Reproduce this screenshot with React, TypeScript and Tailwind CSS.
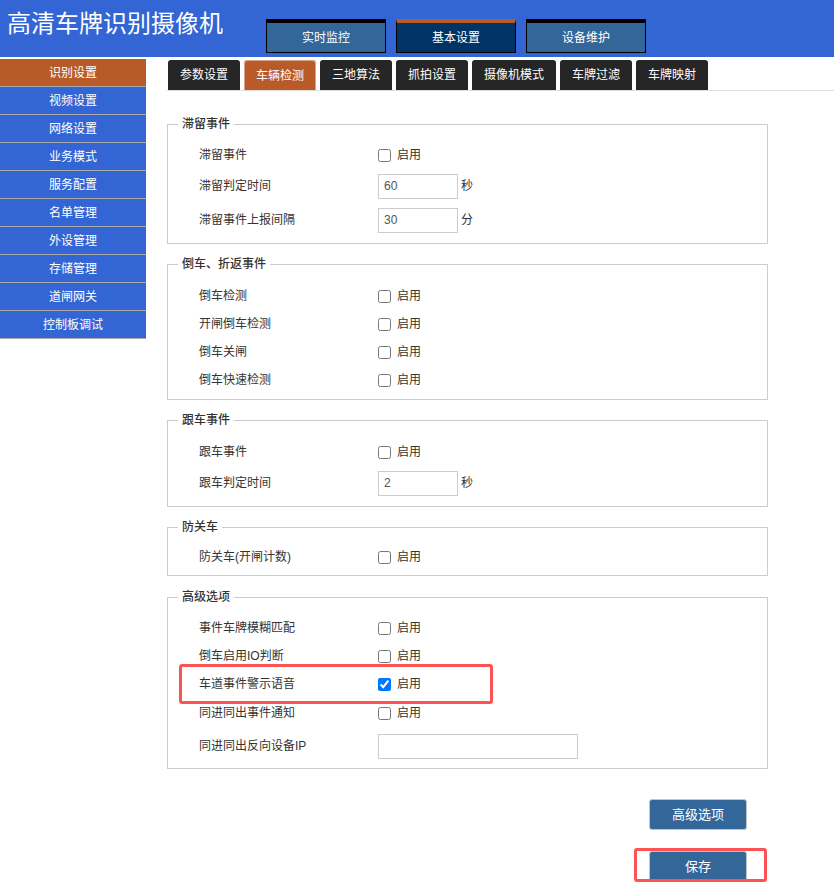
import React from "react";

const FONT = { fontFamily: '"Liberation Sans", "Noto Sans CJK SC", sans-serif' };

const topNav = [
  { label: "实时监控", active: false },
  { label: "基本设置", active: true },
  { label: "设备维护", active: false },
];

const sideMenu = [
  "识别设置",
  "视频设置",
  "网络设置",
  "业务模式",
  "服务配置",
  "名单管理",
  "外设管理",
  "存储管理",
  "道闸网关",
  "控制板调试",
];

const tabs = [
  { label: "参数设置", w: "w-[72px]" },
  { label: "车辆检测", w: "w-[72px]", active: true },
  { label: "三地算法", w: "w-[72px]" },
  { label: "抓拍设置", w: "w-[72px]" },
  { label: "摄像机模式", w: "w-[84px]" },
  { label: "车牌过滤", w: "w-[72px]" },
  { label: "车牌映射", w: "w-[72px]" },
];

// Row with a checkbox + "启用"
function CheckRow({ label, checked }: { label: string; checked?: boolean }) {
  return (
    <div className="flex items-center h-[28px] pl-[21px]">
      <div className="w-[179px] text-[12px] text-[#333]">{label}</div>
      <input
        type="checkbox"
        defaultChecked={checked}
        className="w-[13px] h-[13px]"
      />
      <span className="ml-[6px] text-[12px] text-[#333]">启用</span>
    </div>
  );
}

// Row with a text input and an optional unit
function InputRow({
  label,
  value,
  unit,
  wide,
}: {
  label: string;
  value?: string;
  unit?: string;
  wide?: boolean;
}) {
  return (
    <div className={`flex items-center pl-[21px] ${wide ? "h-[36px] pt-[2px]" : "h-[34px]"}`}>
      <div className="w-[179px] text-[12px] text-[#333]">{label}</div>
      <input
        type="text"
        defaultValue={value}
        className={`${wide ? "w-[200px]" : "w-[80px]"} h-[25px] border border-[#ccc] pl-[5px] text-[12px] text-[#555] outline-none`}
        style={FONT}
      />
      {unit && <span className="ml-[3px] text-[12px] text-[#333]">{unit}</span>}
    </div>
  );
}

function Group({
  title,
  children,
  pad,
}: {
  title: string;
  children: React.ReactNode;
  pad: string;
}) {
  return (
    <fieldset className={`w-[601px] border border-[#ccc] px-[10px] ${pad}`}>
      <legend className="px-[4px] text-[12px] leading-[16px] font-medium text-[#333]">
        {title}
      </legend>
      {children}
    </fieldset>
  );
}

export default function App() {
  return (
    <div className="relative w-[834px] h-[891px] bg-white overflow-hidden" style={FONT}>
      {/* Header */}
      <div className="flex h-[57px] bg-[#3366d4]">
        <div className="w-[266px] pl-[7px] pt-[12px] text-[24px] leading-[24px] text-white">
          高清车牌识别摄像机
        </div>
        <div className="flex gap-[10px] mt-[19px]">
          {topNav.map((n) => (
            <div
              key={n.label}
              className={`w-[120px] h-[34px] border border-black border-t-[4px] flex items-center justify-center text-[12px] text-white ${
                n.active ? "bg-[#003366] border-t-[#b95b28]" : "bg-[#336699]"
              }`}
            >
              {n.label}
            </div>
          ))}
        </div>
      </div>

      <div className="flex">
        {/* Sidebar */}
        <div className="w-[146px] mt-[2px]">
          {sideMenu.map((m, i) => (
            <div
              key={m}
              className={`h-[28px] border-b border-[#aaa] flex items-center justify-center text-[12px] text-white ${
                i === 0 ? "bg-[#b95b28]" : "bg-[#3366d4]"
              }`}
            >
              {m}
            </div>
          ))}
        </div>

        {/* Main */}
        <div className="flex-1 ml-[21px] mt-[3px]">
          <div className="flex gap-[4px] pl-[1px] border-b border-[#ddd] h-[31px]">
            {tabs.map((t) => (
              <div
                key={t.label}
                className={`${t.w} h-[30px] rounded-t-[3px] flex items-center justify-center text-[12px] text-white ${
                  t.active ? "bg-[#b95b28] border border-b-0 border-[#d9a48a]" : "bg-[#262626]"
                }`}
              >
                {t.label}
              </div>
            ))}
          </div>

          <div className="mt-[25px] flex flex-col">
            <Group title="滞留事件" pad="pt-[9px] pb-[6px]">
              <CheckRow label="滞留事件" />
              <InputRow label="滞留判定时间" value="60" unit="秒" />
              <InputRow label="滞留事件上报间隔" value="30" unit="分" />
            </Group>
            <div className="mt-[12px]">
              <Group title="倒车、折返事件" pad="pt-[10px] pb-[5px]">
                <CheckRow label="倒车检测" />
                <CheckRow label="开闸倒车检测" />
                <CheckRow label="倒车关闸" />
                <CheckRow label="倒车快速检测" />
              </Group>
            </div>
            <div className="mt-[12px]">
              <Group title="跟车事件" pad="pt-[10px] pb-[6px]">
                <CheckRow label="跟车事件" />
                <InputRow label="跟车判定时间" value="2" unit="秒" />
              </Group>
            </div>
            <div className="mt-[12px]">
              <Group title="防关车" pad="pt-[8px] pb-[4px]">
                <CheckRow label="防关车(开闸计数)" />
              </Group>
            </div>
            <div className="mt-[13px]">
              <Group title="高级选项" pad="pt-[9px] pb-[5px]">
                <CheckRow label="事件车牌模糊匹配" />
                <CheckRow label="倒车启用IO判断" />
                <CheckRow label="车道事件警示语音" checked />
                <div className="pt-[1px]">
                  <CheckRow label="同进同出事件通知" />
                </div>
                <InputRow label="同进同出反向设备IP" wide />
              </Group>
            </div>
          </div>

          <div className="w-[601px] flex flex-col items-end pr-[21px]">
            <button className="mt-[30px] w-[98px] h-[31px] rounded-[3px] bg-[#336699] border border-[#c4c4c4] text-[13px] text-white">
              高级选项
            </button>
            <button className="mt-[21px] w-[98px] h-[31px] rounded-[3px] bg-[#336699] border border-[#c4c4c4] text-[13px] text-white">
              保存
            </button>
          </div>
        </div>
      </div>

      {/* Red highlight annotations */}
      <div className="absolute left-[179px] top-[664px] w-[314px] h-[40px] border-[3px] border-[#fc5454] rounded-[3px] pointer-events-none" />
      <div className="absolute left-[634px] top-[848px] w-[133px] h-[34px] border-[3px] border-[#fc5454] rounded-[3px] pointer-events-none" />
    </div>
  );
}
